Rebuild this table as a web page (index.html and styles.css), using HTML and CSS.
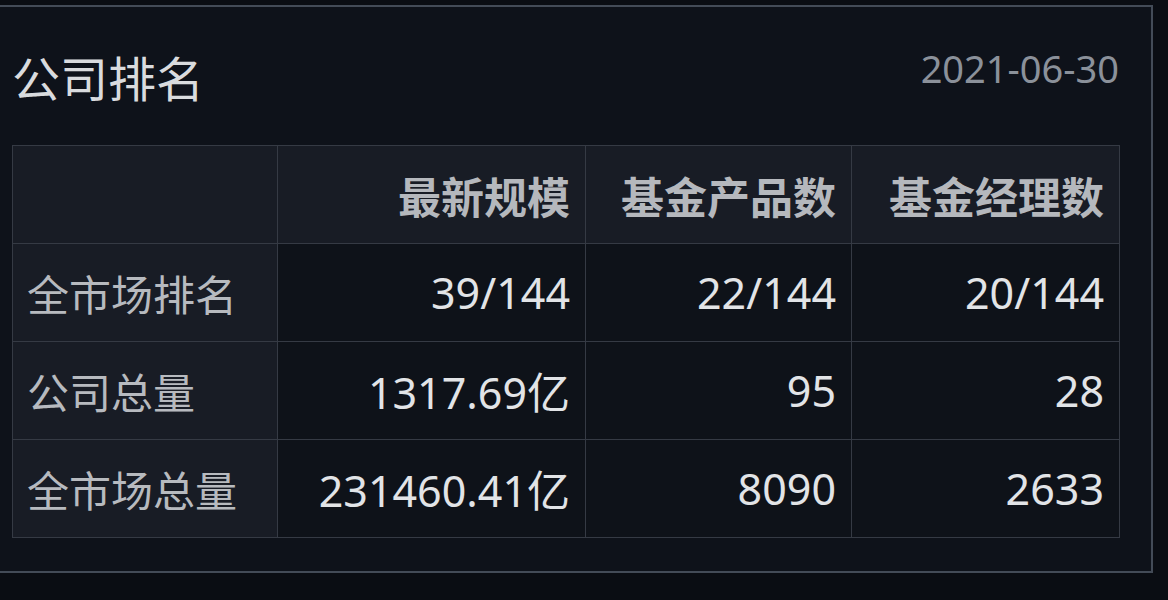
FILE: index.html
```html
<!DOCTYPE html>
<html lang="zh-CN">
<head>
<meta charset="utf-8">
<link rel="stylesheet" href="styles.css">
</head>
<body>
<div class="panel">
  <div class="head">
    <h1 class="title">公司排名</h1>
    <span class="date">2021-06-30</span>
  </div>
  <table class="rank">
    <colgroup>
      <col class="c1"><col class="c2"><col class="c3"><col class="c4">
    </colgroup>
    <thead>
      <tr><th class="corner"></th><th>最新规模</th><th>基金产品数</th><th>基金经理数</th></tr>
    </thead>
    <tbody>
      <tr><td class="label">全市场排名</td><td>39/144</td><td>22/144</td><td>20/144</td></tr>
      <tr><td class="label">公司总量</td><td>1317.69亿</td><td>95</td><td>28</td></tr>
      <tr><td class="label">全市场总量</td><td>231460.41亿</td><td>8090</td><td>2633</td></tr>
    </tbody>
  </table>
</div>
</body>
</html>
```

FILE: styles.css
```css
html, body {
  margin: 0;
  padding: 0;
  background: #0a0d13;
  height: 600px;
  overflow: hidden;
  font-family: "Noto Sans", "Noto Sans CJK SC", sans-serif;
}

.panel {
  margin-top: 5px;
  width: 1153px;
  height: 568px;
  box-sizing: border-box;
  background: #0e121a;
  border-top: 2px solid #434b57;
  border-right: 2px solid #434b57;
  border-bottom: 2px solid #434b57;
  padding: 0 0 0 12px;
}

.head {
  display: flex;
  justify-content: space-between;
  align-items: flex-start;
  width: 1107px;
  height: 138px;
}

.title {
  margin: 36px 0 0 0;
  font-size: 48px;
  font-weight: 400;
  line-height: 66px;
  color: #d9dbde;
  font-family: "Noto Sans CJK SC", sans-serif;
}

.date {
  margin-top: 35px;
  font-size: 38px;
  line-height: 52px;
  color: #8b919a;
}

.rank {
  border-collapse: collapse;
  table-layout: fixed;
  width: 1107px;
}

.c1 { width: 265px; }
.c2 { width: 308px; }
.c3 { width: 266px; }
.c4 { width: 268px; }

.rank th, .rank td {
  border: 1px solid #353a44;
  height: 98px;
  padding: 0 15px 0 15px;
  box-sizing: border-box;
  text-align: right;
  font-size: 43px;
  white-space: nowrap;
}

.rank th {
  background: #181c25;
  color: #b5b8bd;
  font-weight: 700;
  font-family: "Noto Sans CJK SC", sans-serif;
}

.rank td {
  background: #0e1219;
  color: #e2e4e7;
}

.rank td.label {
  background: #181c25;
  color: #b7babf;
  text-align: left;
  font-size: 42px;
  font-family: "Noto Sans CJK SC", sans-serif;
  padding-left: 14px;
}
```
